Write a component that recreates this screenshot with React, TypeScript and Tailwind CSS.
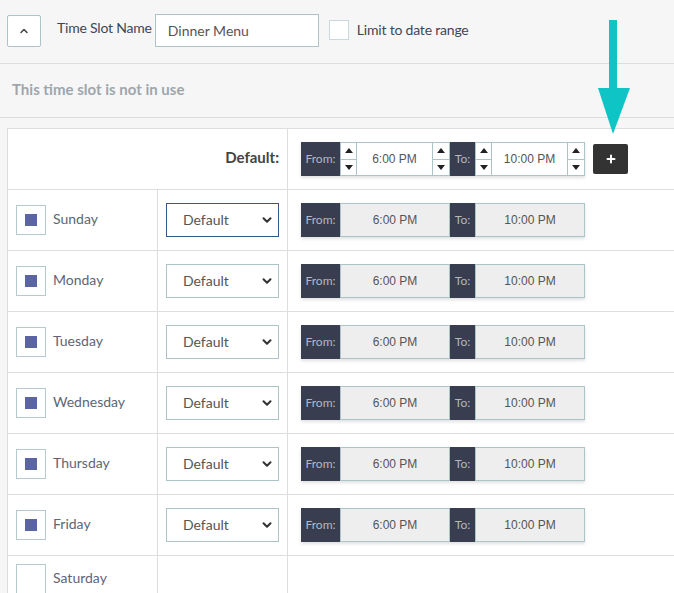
import { ChevronUp, ChevronDown, Plus } from "lucide-react";

const font = { fontFamily: "Lato, 'Open Sans', sans-serif" };

type Day = { name: string; checked: boolean; focused?: boolean; hasTime: boolean };

const days: Day[] = [
  { name: "Sunday", checked: true, focused: true, hasTime: true },
  { name: "Monday", checked: true, hasTime: true },
  { name: "Tuesday", checked: true, hasTime: true },
  { name: "Wednesday", checked: true, hasTime: true },
  { name: "Thursday", checked: true, hasTime: true },
  { name: "Friday", checked: true, hasTime: true },
  { name: "Saturday", checked: false, hasTime: false },
];

function Spinner({ w }: { w: string }) {
  return (
    <div className={`flex ${w} flex-col border-x border-[#aac4c8] bg-white`}>
      <div className="flex flex-1 items-center justify-center border-b border-[#aac4c8]">
        <div className="h-0 w-0 border-x-[4px] border-b-[5px] border-x-transparent border-b-[#222]" />
      </div>
      <div className="flex flex-1 items-center justify-center">
        <div className="h-0 w-0 border-x-[4px] border-t-[5px] border-x-transparent border-t-[#222]" />
      </div>
    </div>
  );
}

function Label({ text, w }: { text: string; w: string }) {
  return (
    <div className={`${w} flex items-center justify-center bg-[#383d4f] text-[12px] text-[#b4b8c2]`} style={font}>
      {text}
    </div>
  );
}

function TimeRange({ editable }: { editable: boolean }) {
  const val = "text-[12px] text-[#555] flex items-center justify-center";
  const arial = { fontFamily: "'Liberation Sans', Arial, sans-serif" };
  if (editable) {
    return (
      <div className="flex h-[34px] shadow-[0_2px_3px_rgba(0,0,0,0.12)]">
        <Label text="From:" w="w-[39px]" />
        <div className="flex border-y border-[#aac4c8]">
          <Spinner w="w-[17px]" />
          <div className={`w-[75px] bg-white ${val}`} style={arial}>6:00 PM</div>
          <Spinner w="w-[18px]" />
        </div>
        <Label text="To:" w="w-[25px]" />
        <div className="flex border-y border-[#aac4c8]">
          <Spinner w="w-[17px]" />
          <div className={`w-[75px] bg-white ${val}`} style={arial}>10:00 PM</div>
          <Spinner w="w-[18px]" />
        </div>
      </div>
    );
  }
  return (
    <div className="flex h-[34px] shadow-[0_2px_3px_rgba(0,0,0,0.12)]">
      <Label text="From:" w="w-[39px]" />
      <div className={`w-[110px] border border-[#aac4c8] bg-[#eeeeee] ${val}`} style={arial}>6:00 PM</div>
      <Label text="To:" w="w-[25px]" />
      <div className={`w-[110px] border border-[#aac4c8] bg-[#eeeeee] ${val}`} style={arial}>10:00 PM</div>
    </div>
  );
}

export default function App() {
  return (
    <div className="relative h-[593px] w-[674px] overflow-hidden bg-[#f6f6f6]" style={font}>
      {/* header */}
      <div className="flex h-[64px] items-start border-b border-[#dddddd] pl-[7px] pt-[14px]">
        <button className="mt-[1px] flex h-[32px] w-[34px] items-center justify-center rounded-[2px] border border-[#aac4c8] bg-white">
          <ChevronUp className="h-[12px] w-[12px] text-[#444]" strokeWidth={3} />
        </button>
        <span className="ml-[16px] mt-[3px] text-[14px] tracking-[-0.2px] text-[#3d4656]">Time Slot Name</span>
        <input
          readOnly
          value="Dinner Menu"
          className="ml-[3px] h-[33px] w-[164px] border border-[#aac4c8] bg-white px-[12px] text-[14px] text-[#555] outline-none"
          style={font}
        />
        <div className="ml-[10px] mt-[6px] h-[20px] w-[20px] border border-[#c8d8dc] bg-white" />
        <span className="ml-[8px] mt-[5px] text-[14px] tracking-[-0.2px] text-[#3d4656]">Limit to date range</span>
      </div>

      {/* status */}
      <div className="flex h-[54px] items-center border-b border-[#dddddd] pb-[3px] pl-[12px]">
        <span className="text-[15px] font-bold text-[#9ea6ad]">This time slot is not in use</span>
      </div>

      {/* schedule table */}
      <div className="ml-[7px] mt-[10px] w-[720px] border-l border-t border-[#dddddd] bg-white">
        <div className="grid h-[61px] grid-cols-[280px_1fr] border-b border-[#dddddd]">
          <div className="flex items-center justify-end border-r border-[#dddddd] pb-[3px] pr-[8px] text-[15px] font-bold text-[#444]">
            Default:
          </div>
          <div className="flex items-center pl-[13px]">
            <TimeRange editable />
            <button className="ml-[8px] flex h-[30px] w-[35px] items-center justify-center rounded-[2px] bg-[#333333]">
              <Plus className="h-[12px] w-[12px] text-white" strokeWidth={4} />
            </button>
          </div>
        </div>

        {days.map((d) => (
          <div
            key={d.name}
            className={`grid grid-cols-[150px_130px_1fr] border-b border-[#dddddd] ${d.hasTime ? "h-[61px]" : "h-[46px]"}`}
          >
            <div className="flex items-center border-r border-[#dddddd] pl-[8px]">
              <div className="flex h-[30px] w-[30px] items-center justify-center border border-[#b4cace] bg-white">
                {d.checked && <div className="h-[12px] w-[12px] bg-[#5a65a1]" />}
              </div>
              <span className="mb-[3px] ml-[7px] text-[14px] text-[#5d6577]">{d.name}</span>
            </div>
            <div className="flex items-center border-r border-[#dddddd] pl-[8px]">
              {d.hasTime && (
                <div
                  className={`flex h-[34px] w-[113px] items-center justify-between border bg-white pl-[16px] pr-[4px] ${
                    d.focused ? "border-[#2f5b86]" : "border-[#aac4c8]"
                  }`}
                >
                  <span className="mb-[2px] text-[14px] text-[#555]">Default</span>
                  <ChevronDown className="h-[14px] w-[14px] text-[#333]" strokeWidth={3.5} />
                </div>
              )}
            </div>
            <div className="flex items-center pl-[13px]">{d.hasTime && <TimeRange editable={false} />}</div>
          </div>
        ))}
      </div>

      {/* callout arrow */}
      <svg className="absolute left-[596px] top-[18px]" width="36" height="118" viewBox="0 0 36 118">
        <rect x="13" y="2" width="8" height="72" fill="#0fc4c4" />
        <polygon points="2,70 34,70 17,116" fill="#0fc4c4" />
      </svg>
    </div>
  );
}
